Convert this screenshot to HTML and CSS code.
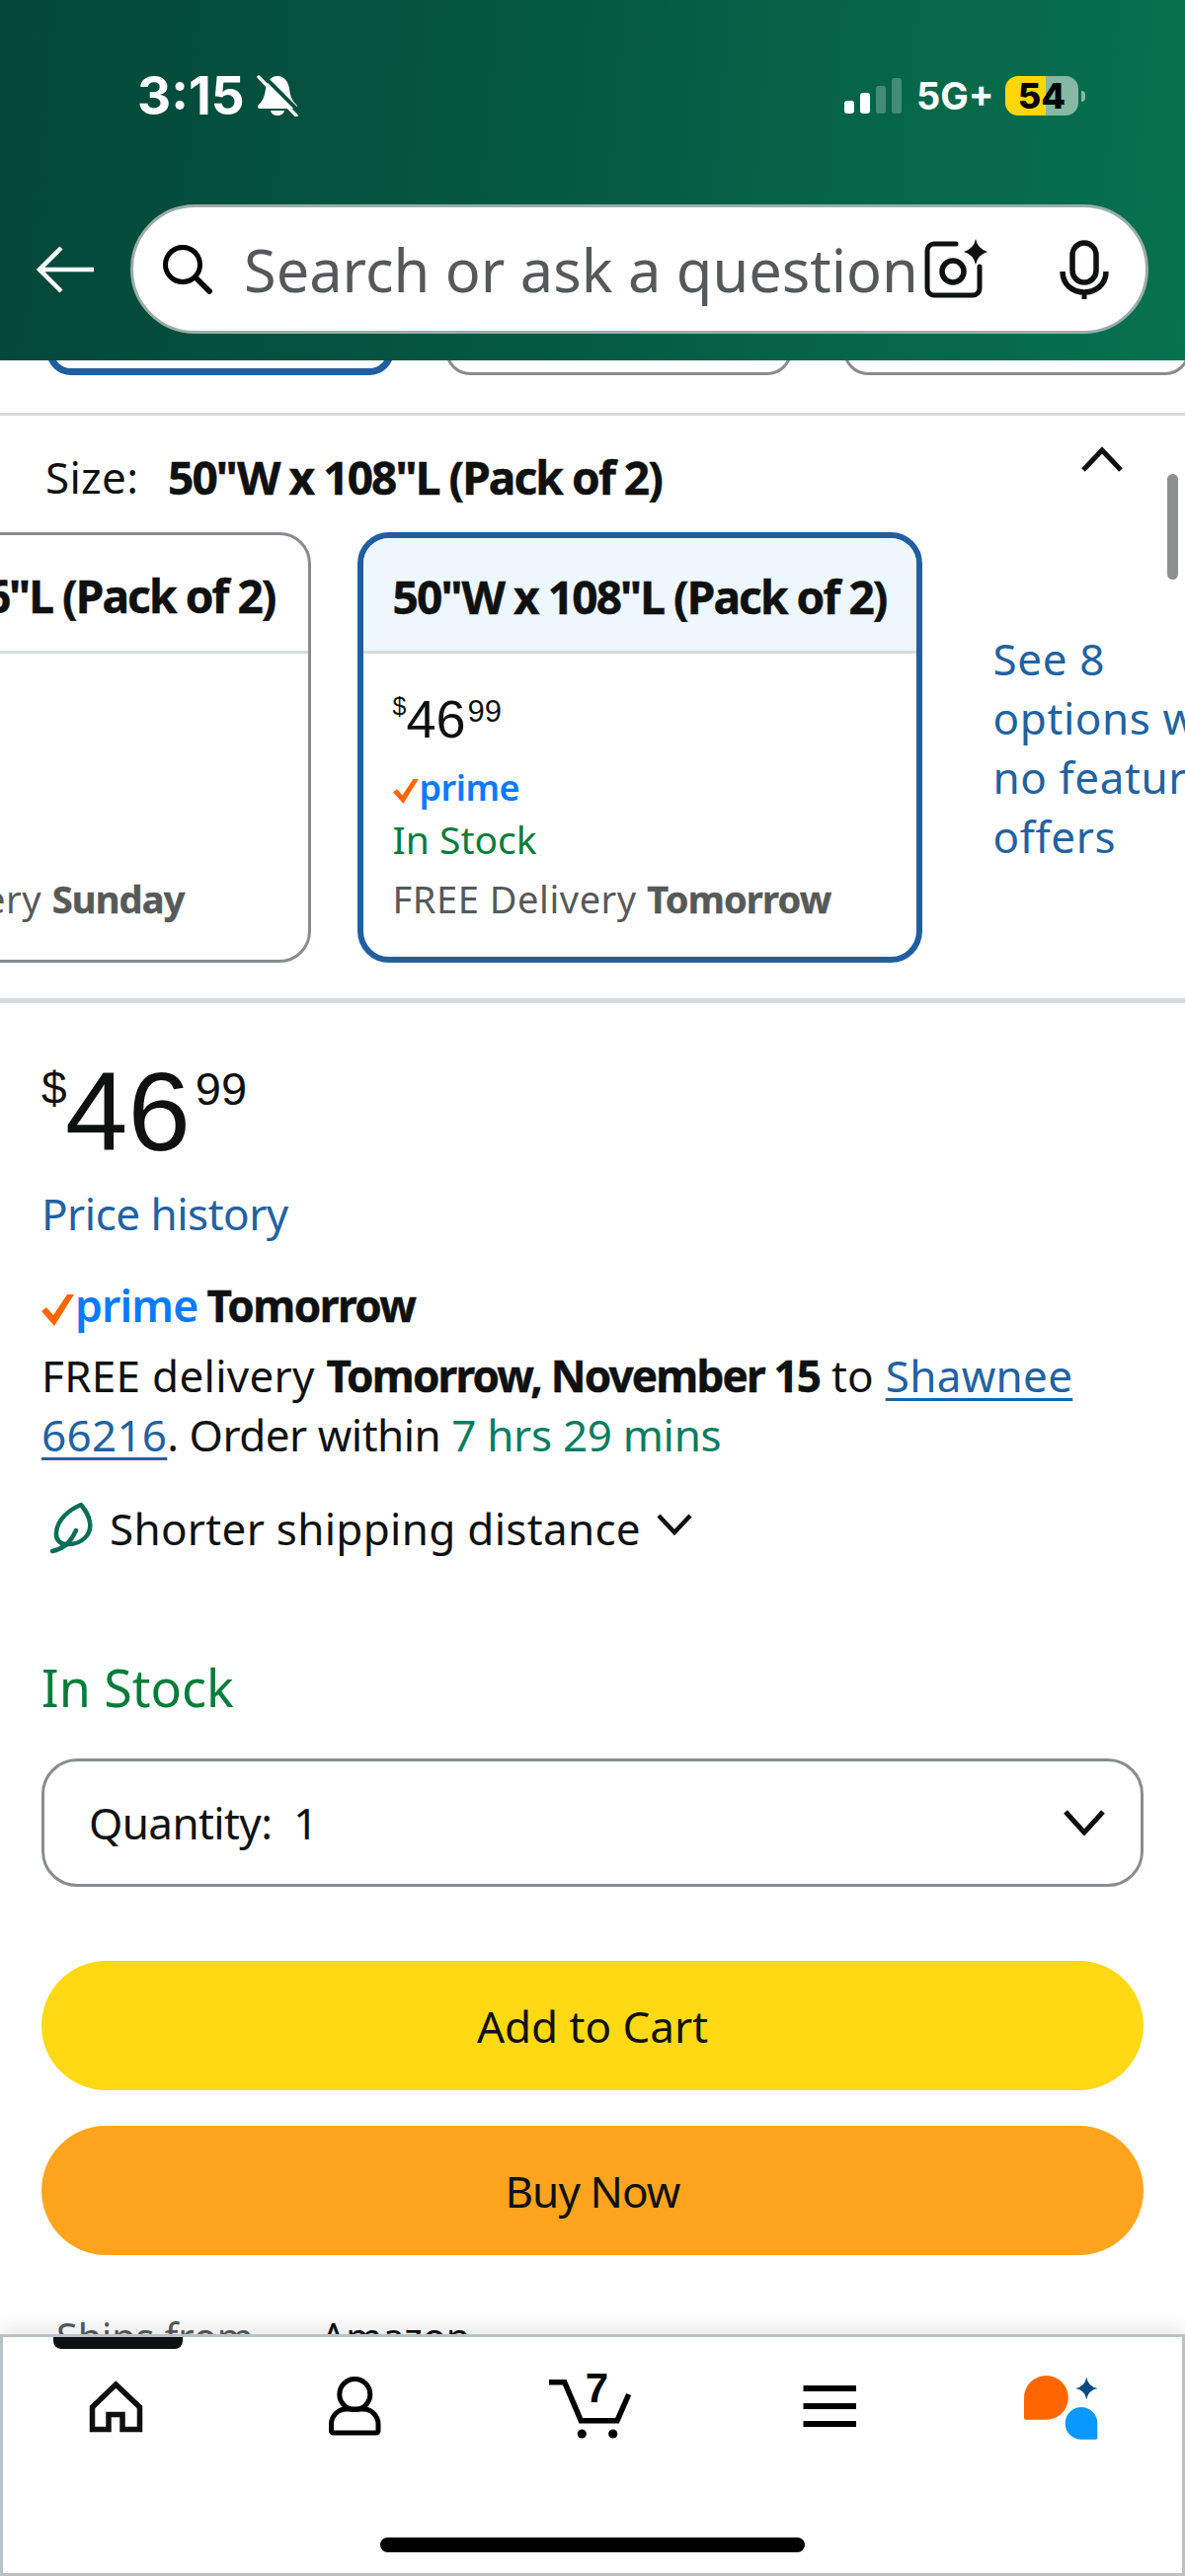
FILE: index.html
```html
<!DOCTYPE html>
<html lang="en">
<head>
<meta charset="utf-8">
<title>Product</title>
<link rel="stylesheet" href="styles.css">
</head>
<body>
<div class="screen">
  <header class="header">
    <div class="status">
      <span class="time">3:15</span>
      <svg class="bell" viewBox="0 0 42 42"><path fill="#fff" d="M21 1C14 1 10 7 9 14C8 22 6 26 2 30C0 32 1 34 4 34H38C41 34 42 32 40 30C36 26 34 22 33 14C32 7 28 1 21 1Z"/><path fill="#fff" d="M14 36H28C27 40 24 41 21 41C18 41 15 40 14 36Z"/><path stroke="#04503d" stroke-width="4" d="M5 -1L45 39"/><path stroke="#fff" stroke-width="3.4" stroke-linecap="round" d="M2 2L40 41"/></svg>
      <div class="signal"><i class="b1"></i><i class="b2"></i><i class="b3"></i><i class="b4"></i></div>
      <span class="net">5G+</span>
      <div class="battery"><span class="batt-num">54</span></div>
      <i class="nub"></i>
    </div>
    <div class="search-row">
      <svg class="back" viewBox="0 0 58 48"><path fill="none" stroke="#fff" stroke-width="4.5" d="M58 24H3M25 2L3 24L25 46"/></svg>
      <div class="search">
        <svg class="s-icon" viewBox="0 0 50 50"><circle cx="20" cy="20" r="17.5" fill="none" stroke="#000" stroke-width="5"/><path stroke="#000" stroke-width="5.5" d="M32 32L49 49"/></svg>
        <span class="placeholder">Search or ask a question</span>
        <svg class="cam" viewBox="0 0 66 62"><path fill="none" stroke="#0f1111" stroke-width="5" stroke-linecap="round" d="M32 5H10A7 7 0 0 0 3 12V50A7 7 0 0 0 10 57H49A7 7 0 0 0 56 50V28"/><circle cx="29" cy="33" r="11" fill="none" stroke="#0f1111" stroke-width="5.5"/><path fill="#0f1111" d="M52 0Q54 10 64 13Q54 16 52 26Q50 16 40 13Q50 10 52 0Z"/></svg>
        <svg class="mic" viewBox="0 0 50 60"><rect x="13" y="3" width="24" height="40" rx="12" fill="none" stroke="#0f1111" stroke-width="5.5"/><path fill="none" stroke="#0f1111" stroke-width="5.5" d="M3 32C3 45 13 53 25 53C37 53 47 45 47 32"/><path stroke="#0f1111" stroke-width="5" d="M25 52V60"/></svg>
      </div>
    </div>
  </header>

  <main class="main">
    <div class="stubs">
      <div class="stub stub-sel"></div>
      <div class="stub"></div>
      <div class="stub"></div>
    </div>
    <div class="rule"></div>

    <section class="size-row">
      <span class="size-label">Size:</span>
      <strong class="size-value">50"W x 108"L (Pack of 2)</strong>
      <svg class="chev-up" viewBox="0 0 42 26"><path fill="none" stroke="#0f1111" stroke-width="5" d="M2 24L21 4L40 24"/></svg>
      <i class="scrollbar"></i>
    </section>

    <section class="cards">
      <article class="card">
        <div class="card-head">50"W x 96"L (Pack of 2)</div>
        <div class="card-body">
          <div class="mini-price"><span class="mp-cur">$</span><span class="mp-main">39</span><span class="mp-frac">99</span></div>
          <div class="mini-prime"></div>
          <div class="mini-stock"></div>
          <div class="mini-ship mini-ship-off">FREE Delivery <b>Sunday</b></div>
        </div>
      </article>
      <article class="card card-sel">
        <div class="card-head">50"W x 108"L (Pack of 2)</div>
        <div class="card-body">
          <div class="mini-price"><span class="mp-cur">$</span><span class="mp-main">46</span><span class="mp-frac">99</span></div>
          <div class="mini-prime">
            <svg class="check-s" viewBox="0 0 33 32"><path fill="#f60" d="M0 17L5 13L12 21L26 0H33L13 32Z"/></svg>
            <span class="prime-s">prime</span>
          </div>
          <div class="mini-stock">In Stock</div>
          <div class="mini-ship">FREE Delivery <b>Tomorrow</b></div>
        </div>
      </article>
      <a class="see-more">See 8 options with no featured offers</a>
    </section>
    <div class="rule-thick"></div>

    <section class="buybox">
      <div class="price"><span class="p-cur">$</span><span class="p-main">46</span><span class="p-frac">99</span></div>
      <a class="history">Price history</a>
      <div class="prime-row">
        <svg class="check" viewBox="0 0 33 32"><path fill="#f60" d="M0 17L5 13L12 21L26 0H33L13 32Z"/></svg>
        <span class="prime">prime</span>
        <b class="prime-day">Tomorrow</b>
      </div>
      <p class="delivery">FREE delivery <b>Tomorrow, November 15</b> to <a class="loc">Shawnee 66216</a><span class="order">. Order within </span><span class="timer">7 hrs 29 mins</span></p>
      <div class="shipping">
        <svg class="leaf" viewBox="0 0 48 54"><path fill="none" stroke="#0a6e57" stroke-width="4.5" stroke-linecap="round" stroke-linejoin="round" d="M32 3C20 8 8 18 7 31C6 39 12 44 19 43C33 43 43 33 41 21C40 13 36 8 32 3Z"/><path fill="none" stroke="#0a6e57" stroke-width="4.5" stroke-linecap="round" d="M3 50C12 48 20 44 27 29"/></svg>
        <span class="ship-text">Shorter shipping distance</span>
        <svg class="chev-small" viewBox="0 0 36 22"><path fill="none" stroke="#0f1111" stroke-width="4.5" d="M2 2L18 19L34 2"/></svg>
      </div>
      <div class="stock">In Stock</div>
      <div class="qty"><span class="qty-text">Quantity:&nbsp; 1</span><svg class="chev-qty" viewBox="0 0 42 26"><path fill="none" stroke="#0f1111" stroke-width="5" d="M2 2L21 23L40 2"/></svg></div>
      <div class="btn btn-cart">Add to Cart</div>
      <div class="btn btn-buy">Buy Now</div>
      <div class="ships"><span class="ships-k">Ships from</span><span class="ships-v">Amazon</span></div>
    </section>
  </main>

  <footer class="footer">
    <i class="tab-mark"></i>
    <nav class="tabs">
      <svg class="tab" viewBox="0 0 80 80"><path fill="none" stroke="#0f1111" stroke-width="5.5" d="M16.5 60.5V38L40.3 15L64.5 38V60.5H47V45.5H33V60.5Z"/></svg>
      <svg class="tab" viewBox="0 0 80 80"><circle cx="42.3" cy="25" r="15.5" fill="none" stroke="#000" stroke-width="5"/><path fill="none" stroke="#000" stroke-width="5" d="M18.5 62V55A15 15 0 0 1 33.5 40H51A15 15 0 0 1 66 55V62A2 2 0 0 1 64 64H20.5A2 2 0 0 1 18.5 62Z"/></svg>
      <svg class="tab tab-cart" viewBox="0 0 90 80"><path fill="none" stroke="#000" stroke-width="5.5" d="M4 12.7H19.7L36.3 51.7H73L84.7 25"/><circle cx="37.3" cy="65" r="4.6"/><circle cx="68.7" cy="65" r="4.6"/><text class="cart-count" x="52.5" y="33" text-anchor="middle">7</text></svg>
      <svg class="tab" viewBox="0 0 80 80"><rect x="16.5" y="16" width="53.5" height="6"/><rect x="16.5" y="34" width="53.5" height="6"/><rect x="16.5" y="52" width="53.5" height="6"/></svg>
      <svg class="tab" viewBox="0 0 80 80"><path fill="#f60" d="M0 28.4A22.4 22.4 0 1 1 22.4 50.8H2A2 2 0 0 1 0 48.8Z"/><path fill="#0a99fb" d="M74.3 54.4A16.3 16.3 0 1 0 58 70.7H72.3A2 2 0 0 0 74.3 68.7Z"/><path fill="#0b4a80" d="M63.3 7.7Q65 17.3 74.6 19Q65 20.7 63.3 30.3Q61.6 20.7 52 19Q61.6 17.3 63.3 7.7Z"/></svg>
    </nav>
    <i class="home-bar"></i>
  </footer>
</div>
</body>
</html>
```

FILE: styles.css
```css
* { box-sizing: border-box; }
html, body { margin: 0; padding: 0; background: #fff; }
a { color: inherit; }
svg { display: block; flex-shrink: 0; }
.screen {
  width: 1200px; height: 2609px; overflow: hidden; position: relative;
  display: flex; flex-direction: column;
  font-family: "Noto Sans", sans-serif; font-size: 44px; line-height: 60px; color: #0f1111;
}

/* Header */
.header {
  height: 365px; flex-shrink: 0; padding-top: 70px;
  background: linear-gradient(95deg, #03473a 0%, #055a43 50%, #07724e 100%);
}
.status { height: 54px; display: flex; align-items: center; padding-left: 139px; color: #fff; position: relative; }
.time { font-family: Inter, sans-serif; font-weight: 700; font-size: 53px; line-height: 54px; width: 121px; }
.bell { width: 42px; height: 42px; }
.signal { margin-left: auto; display: flex; align-items: flex-end; gap: 6px; height: 36px; margin-right: 15px; }
.signal i { width: 10px; background: #fff; border-radius: 3px; display: block; }
.b1 { height: 13px; } .b2 { height: 21px; }
.signal .b3 { height: 28px; background: rgba(255,255,255,.25); }
.signal .b4 { height: 36px; background: rgba(255,255,255,.25); }
.net { font-family: Inter, sans-serif; font-weight: 700; font-size: 38px; line-height: 40px; width: 90px; }
.battery {
  width: 74px; height: 40px; border-radius: 13px;
  background: linear-gradient(90deg, #ffd60a 0 41px, #86b8a3 41px);
  display: flex; align-items: center; justify-content: center;
}
.batt-num { font-family: Inter, sans-serif; font-weight: 800; font-size: 36px; line-height: 40px; color: #000; }
.nub { width: 4px; height: 11px; margin: 0 101px 0 3px; background: #86b8a3; border-radius: 0 5px 5px 0; display: block; }
.search-row { display: flex; align-items: center; gap: 37px; padding-left: 37px; margin-top: 83px; }
.back { width: 58px; height: 48px; }
.search {
  width: 1031px; height: 131px; background: #fff; border: 3px solid #9aadab; border-radius: 66px;
  display: flex; align-items: center; padding: 0 37px 0 30px;
}
.s-icon { width: 50px; height: 50px; margin-right: 32px; }
.placeholder { flex: 1; min-width: 0; white-space: nowrap; font-size: 59.5px; color: #565959; line-height: 60px; }
.cam { width: 66px; height: 62px; margin-right: 71px; }
.mic { width: 50px; height: 60px; }

/* Top swatch stubs */
.main { flex: 1; min-height: 0; overflow: hidden; }
.stubs { height: 53px; display: flex; gap: 52px; padding-left: 47px; overflow: hidden; }
.stub { height: 50px; width: 351px; margin-top: -35px; flex-shrink: 0; border: 3px solid #888c8c; border-radius: 32px; }
.stub-sel { width: 352px; border: 7px solid #1f5f9f; }
.rule { height: 3px; background: #d5dbdb; }

.size-row { height: 118px; display: flex; align-items: center; padding: 6px 0 0 46px; position: relative; }
.size-label { width: 124px; letter-spacing: .3px; }
.size-value, .card-head { font-size: 46px; font-weight: 700; letter-spacing: -1.9px; -webkit-text-stroke: .5px currentColor; }
.chev-up { width: 42px; height: 26px; margin: -36px 63px 0 auto; }
.scrollbar { position: absolute; right: 7px; top: 59px; width: 11px; height: 107px; border-radius: 6px; background: #8d9191; }

/* Cards */
.cards { display: flex; align-items: stretch; gap: 47px; margin-left: -233px; height: 436px; }
.card { flex-shrink: 0; border: 3px solid #888c8c; border-radius: 32px; overflow: hidden; background: #fff; }
.card-sel { border: 6px solid #1f5f9f; }
.card-head { height: 120px; padding: 4px 33px 0; display: flex; align-items: center; border-bottom: 3px solid #d5dbdb; white-space: nowrap; }
.card-sel .card-head { height: 117px; padding: 4px 30px 0; background: #edf7fd; }
.card-body { padding: 36px 33px 0; }
.card-sel .card-body { padding: 36px 30px 0; }
.mini-price { display: flex; align-items: flex-start; height: 60px; font-family: "Liberation Sans", sans-serif; }
.mp-cur { font-size: 25px; line-height: 30px; margin-top: 2px; }
.mp-main { font-size: 54px; line-height: 60px; }
.mp-frac { font-size: 31px; line-height: 30px; margin-top: 8px; margin-left: 2px; }
.mini-prime { height: 45px; margin-top: 17px; display: flex; align-items: center; gap: 1px; }
.check-s { width: 26px; height: 25px; margin-top: 8px; }
.prime-s { font-weight: 600; font-size: 36px; line-height: 45px; color: #0a7bff; letter-spacing: -.5px; }
.mini-stock { height: 60px; color: #067d3a; font-size: 39px; }
.mini-ship { font-size: 38px; color: #565959; white-space: nowrap; letter-spacing: .55px; }
.mini-ship b { letter-spacing: -.8px; -webkit-text-stroke: .4px currentColor; }
.mini-ship-off { margin-left: -8px; }
.see-more { width: 280px; flex-shrink: 0; align-self: center; color: #2162a1; margin-left: 25px; letter-spacing: .6px; }
.rule-thick { height: 5px; margin-top: 36px; background: #d5dbdb; }

/* Buy box */
.buybox { padding: 0 42px; }
.price { display: flex; align-items: flex-start; height: 120px; margin-top: 50px; font-family: "Liberation Sans", sans-serif; }
.p-cur { font-size: 46px; line-height: 42px; margin-top: 15px; width: 24px; }
.p-main { font-size: 114px; line-height: 120px; }
.p-frac { font-size: 47px; line-height: 44px; margin-top: 15px; margin-left: 5px; }
.history { display: block; margin-top: 13px; color: #2162a1; letter-spacing: -.5px; }
.prime-row { height: 60px; margin-top: 33px; display: flex; align-items: center; }
.check { width: 33px; height: 32px; margin-top: 10px; margin-right: 1px; }
.prime { font-weight: 600; font-size: 44.5px; color: #0a7bff; letter-spacing: -.8px; }
.prime-day { margin-left: 9px; letter-spacing: -1.5px; -webkit-text-stroke: .5px currentColor; }
.delivery { margin: 11px 0 0; letter-spacing: .3px; }
.delivery b { letter-spacing: -1.8px; -webkit-text-stroke: .5px currentColor; }
.loc { color: #2162a1; text-decoration: underline; text-underline-offset: 6px; text-decoration-thickness: 3px; }
.order { letter-spacing: -.5px; }
.timer { color: #067d62; letter-spacing: -.3px; }
.shipping { height: 60px; margin-top: 35px; padding-left: 8px; display: flex; align-items: center; gap: 13px; }
.ship-text { letter-spacing: .3px; }
.leaf { width: 48px; height: 54px; }
.chev-small { width: 36px; height: 22px; margin: -8px 0 0 3px; }
.stock { margin-top: 101px; font-size: 52px; color: #067d3a; }
.qty {
  height: 130px; margin-top: 42px; border: 3px solid #888c8c; border-radius: 36px;
  display: flex; align-items: center; justify-content: space-between; padding: 0 36px 0 45px;
}
.qty-text { letter-spacing: -.6px; }
.chev-qty { width: 42px; height: 26px; }
.btn { height: 131px; margin-top: 36px; border-radius: 66px; display: flex; align-items: center; justify-content: center; }
.btn-cart { margin-top: 75px; background: #ffd913; }
.btn-buy { background: #ffa41c; letter-spacing: -.9px; }
.ships { margin-top: 53px; padding-left: 15px; display: flex; font-size: 39.5px; }
.ships-k { width: 268px; color: #565959; }

/* Footer */
.footer {
  height: 245px; flex-shrink: 0; position: relative; background: #fff;
  border: 3px solid #b8c2c4; box-shadow: 0 -6px 18px rgba(15,17,17,.1);
}
.tab-mark { position: absolute; left: 51px; top: 0; width: 131px; height: 12px; background: #0f1111; border-radius: 0 0 8px 8px; }
.tabs { display: grid; grid-template-columns: repeat(5, 228px); column-gap: 12px; padding-top: 33px; justify-items: center; }
.tab { width: 80px; height: 80px; }
.tab-cart { width: 90px; }
.cart-count { font-family: "Liberation Sans", sans-serif; font-weight: 700; font-size: 42px; }
.home-bar { position: absolute; left: 382px; bottom: 21px; width: 430px; height: 15px; border-radius: 8px; background: #000; }
```
